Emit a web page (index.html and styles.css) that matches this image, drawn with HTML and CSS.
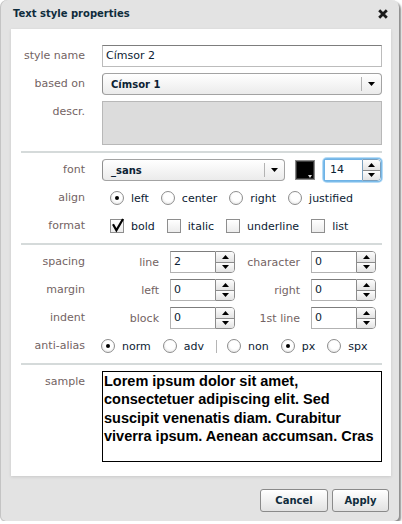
FILE: index.html
```html
<!DOCTYPE html>
<html>
<head>
<meta charset="utf-8">
<link rel="stylesheet" href="styles.css">
</head>
<body>
<div class="window">
  <div class="titlebar">
    <span class="title">Text style properties</span>
    <svg class="close" viewBox="0 0 10 10" width="10" height="10"><path d="M1.2 1.2L8.8 8.8M8.8 1.2L1.2 8.8" stroke="#1b1b1b" stroke-width="2.8" fill="none"/></svg>
  </div>
  <div class="panel">
    <div class="row s1">
      <div class="label">style name</div>
      <div class="field">Címsor 2</div>
    </div>
    <div class="row s1">
      <div class="label">based on</div>
      <div class="select">
        <span class="select-text">Címsor 1</span>
        <span class="select-btn"><svg width="7" height="4" viewBox="0 0 7 4"><path d="M0 0H7L3.5 4Z" fill="#000"/></svg></span>
      </div>
    </div>
    <div class="row s1">
      <div class="label">descr.</div>
      <div class="descr"></div>
    </div>
    <div class="sep"></div>
    <div class="row">
      <div class="label">font</div>
      <div class="font-ctrl">
        <div class="select font-select">
          <span class="select-text">_sans</span>
          <span class="select-btn"><svg width="7" height="4" viewBox="0 0 7 4"><path d="M0 0H7L3.5 4Z" fill="#000"/></svg></span>
        </div>
        <div class="swatch"><svg class="swatch-arrow" width="4" height="3" viewBox="0 0 4 3"><path d="M0 0H4L2 3Z" fill="#ddd"/></svg></div>
        <div class="num size">
          <div class="num-text">14</div>
          <div class="spin">
            <span><svg width="7" height="4" viewBox="0 0 7 4"><path d="M0 4H7L3.5 0Z" fill="#000"/></svg></span>
            <span><svg width="7" height="4" viewBox="0 0 7 4"><path d="M0 0H7L3.5 4Z" fill="#000"/></svg></span>
          </div>
        </div>
      </div>
    </div>
    <div class="row">
      <div class="label">align</div>
      <div class="opts">
        <div class="opt"><span class="radio"><span class="dot"></span></span>left</div>
        <div class="opt"><span class="radio"></span>center</div>
        <div class="opt"><span class="radio"></span>right</div>
        <div class="opt"><span class="radio"></span>justified</div>
      </div>
    </div>
    <div class="row">
      <div class="label">format</div>
      <div class="opts">
        <div class="opt"><span class="check"><svg width="12" height="12" viewBox="0 0 12 12"><path d="M2 4.2L5.4 10.3L12 -1" stroke="#000" stroke-width="2.2" fill="none"/></svg></span>bold</div>
        <div class="opt"><span class="check"></span>italic</div>
        <div class="opt"><span class="check"></span>underline</div>
        <div class="opt"><span class="check"></span>list</div>
      </div>
    </div>
    <div class="sep"></div>
    <div class="row">
      <div class="label">spacing</div>
      <div class="grid4">
        <div class="sub">line</div>
        <div class="num">
          <div class="num-text">2</div>
          <div class="spin">
            <span><svg width="7" height="4" viewBox="0 0 7 4"><path d="M0 4H7L3.5 0Z" fill="#000"/></svg></span>
            <span><svg width="7" height="4" viewBox="0 0 7 4"><path d="M0 0H7L3.5 4Z" fill="#000"/></svg></span>
          </div>
        </div>
        <div class="sub">character</div>
        <div class="num">
          <div class="num-text">0</div>
          <div class="spin">
            <span><svg width="7" height="4" viewBox="0 0 7 4"><path d="M0 4H7L3.5 0Z" fill="#000"/></svg></span>
            <span><svg width="7" height="4" viewBox="0 0 7 4"><path d="M0 0H7L3.5 4Z" fill="#000"/></svg></span>
          </div>
        </div>
      </div>
    </div>
    <div class="row">
      <div class="label">margin</div>
      <div class="grid4">
        <div class="sub">left</div>
        <div class="num">
          <div class="num-text">0</div>
          <div class="spin">
            <span><svg width="7" height="4" viewBox="0 0 7 4"><path d="M0 4H7L3.5 0Z" fill="#000"/></svg></span>
            <span><svg width="7" height="4" viewBox="0 0 7 4"><path d="M0 0H7L3.5 4Z" fill="#000"/></svg></span>
          </div>
        </div>
        <div class="sub">right</div>
        <div class="num">
          <div class="num-text">0</div>
          <div class="spin">
            <span><svg width="7" height="4" viewBox="0 0 7 4"><path d="M0 4H7L3.5 0Z" fill="#000"/></svg></span>
            <span><svg width="7" height="4" viewBox="0 0 7 4"><path d="M0 0H7L3.5 4Z" fill="#000"/></svg></span>
          </div>
        </div>
      </div>
    </div>
    <div class="row">
      <div class="label">indent</div>
      <div class="grid4">
        <div class="sub">block</div>
        <div class="num">
          <div class="num-text">0</div>
          <div class="spin">
            <span><svg width="7" height="4" viewBox="0 0 7 4"><path d="M0 4H7L3.5 0Z" fill="#000"/></svg></span>
            <span><svg width="7" height="4" viewBox="0 0 7 4"><path d="M0 0H7L3.5 4Z" fill="#000"/></svg></span>
          </div>
        </div>
        <div class="sub">1st line</div>
        <div class="num">
          <div class="num-text">0</div>
          <div class="spin">
            <span><svg width="7" height="4" viewBox="0 0 7 4"><path d="M0 4H7L3.5 0Z" fill="#000"/></svg></span>
            <span><svg width="7" height="4" viewBox="0 0 7 4"><path d="M0 0H7L3.5 4Z" fill="#000"/></svg></span>
          </div>
        </div>
      </div>
    </div>
    <div class="row">
      <div class="label">anti-alias</div>
      <div class="opts aa">
        <div class="opt"><span class="radio"><span class="dot"></span></span>norm</div>
        <div class="opt"><span class="radio"></span>adv</div>
        <span class="vsep"></span>
        <div class="opt"><span class="radio"></span>non</div>
        <div class="opt"><span class="radio"><span class="dot"></span></span>px</div>
        <div class="opt"><span class="radio"></span>spx</div>
      </div>
    </div>
    <div class="sep"></div>
    <div class="row">
      <div class="label">sample</div>
      <div class="sample">Lorem ipsum dolor sit amet,<br>consectetuer adipiscing elit. Sed<br>suscipit venenatis diam. Curabitur<br>viverra ipsum. Aenean accumsan. Cras</div>
    </div>
  </div>
  <div class="footer">
    <div class="btn cancel">Cancel</div>
    <div class="btn apply">Apply</div>
  </div>
</div>
</body>
</html>
```
FILE: styles.css
```css
* { box-sizing: border-box; }
body {
  margin: 0;
  background: #fff;
  font-family: "DejaVu Sans", Verdana, sans-serif;
  font-size: 11px;
  color: #0c2233;
}
.window {
  width: 399px;
  height: 521px;
  background: #e3e3e3;
  border-radius: 7px 7px 5px 5px;
  box-shadow: inset 1px 0 0 #c4c4c4, 2px 2px 2px rgba(0,0,0,0.45);
  display: flex;
  flex-direction: column;
}
.titlebar {
  height: 29px;
  display: flex;
  justify-content: space-between;
  align-items: flex-start;
  padding: 7px 11px 0 13px;
}
.title {
  font-weight: bold;
  font-size: 10px;
  line-height: 14px;
  color: #0f2c3c;
}
.close { margin-top: 2px; }
.panel {
  margin-left: 11px;
  width: 380px;
  height: 447px;
  background: #fff;
  padding: 16px 9px 14px 10px;
  display: flex;
  flex-direction: column;
  gap: 6px;
  box-shadow: 0 1px 3px rgba(0,0,0,0.12);
}
.row {
  display: grid;
  grid-template-columns: 64px 280px;
  column-gap: 17px;
}
.label {
  text-align: right;
  color: #736363;
  line-height: 14px;
  padding-top: 4px;
  white-space: nowrap;
}
.field {
  height: 22px;
  border: 1px solid #bcbcbc;
  border-top-color: #7d7d7d;
  padding-left: 3px;
  line-height: 20px;
}
.select {
  height: 22px;
  border: 1px solid #a3a3a3;
  border-left-color: #8f8f8f;
  border-radius: 4px;
  background: linear-gradient(#ffffff, #ebebeb);
  display: flex;
  align-items: center;
}
.select-text {
  flex: 1;
  padding-left: 8px;
  font-weight: bold;
  font-size: 10px;
}
.select-btn {
  width: 20px;
  height: 14px;
  border-left: 1px solid #b3b3b3;
  display: flex;
  align-items: center;
  justify-content: center;
}
.descr {
  height: 44px;
  background: #dcdcdc;
  border: 1px solid #b8b8b8;
}
.sep {
  height: 2px;
  background: #d5dada;
}
.font-ctrl {
  display: flex;
  align-items: center;
}
.font-select { width: 183px; }
.swatch {
  position: relative;
  margin-left: 10px;
  width: 20px;
  height: 20px;
  border: 1px solid #8a8a8a;
  background: #000;
  box-shadow: inset 0 0 0 1px #3a3a3a;
}
.swatch-arrow {
  position: absolute;
  right: 2px;
  bottom: 1px;
}
.num {
  display: flex;
  height: 22px;
}
.num-text {
  flex: 1;
  border: 1px solid #b2b2b2;
  border-top-color: #7d7d7d;
  border-right: none;
  padding-left: 3px;
  line-height: 20px;
  background: #fff;
}
.spin {
  width: 20px;
  display: flex;
  flex-direction: column;
  border: 1px solid #8b8b8b;
  border-radius: 0 4px 4px 0;
  overflow: hidden;
}
.spin span {
  flex: 1;
  display: flex;
  align-items: center;
  justify-content: center;
  background: linear-gradient(#fdfdfd, #e3e3e3);
}
.spin span + span { border-top: 1px solid #8b8b8b; }
.num.size {
  margin-left: 9px;
  width: 57px;
  border-radius: 3px;
  box-shadow: 0 0 0 1px #7cbcea, 0 0 0 2px #b7dcf6;
}
.num.size .num-text {
  border-color: #6fb3e6;
  padding-left: 5px;
}
.num.size .spin { width: 19px; border-color: #7a9fbd; }
.opts {
  display: flex;
  align-items: center;
  gap: 12px;
  padding-left: 8px;
  height: 22px;
}
.opts.aa {
  padding-left: 0;
  margin-left: -1px;
}
.opt {
  display: flex;
  align-items: center;
  gap: 7px;
  white-space: nowrap;
}
.radio {
  width: 14px;
  height: 14px;
  border-radius: 50%;
  border: 1px solid #8e8e8e;
  background: radial-gradient(circle at 55% 40%, #ffffff 45%, #d9d9d9 100%);
  display: flex;
  align-items: center;
  justify-content: center;
}
.dot {
  width: 4px;
  height: 4px;
  border-radius: 50%;
  background: #000;
}
.check {
  width: 14px;
  height: 14px;
  border: 1px solid #8e8e8e;
  background: linear-gradient(#ffffff, #ececec);
  display: flex;
}
.check svg { overflow: visible; }
.vsep {
  width: 1px;
  height: 13px;
  background: #b5b5b5;
  margin-right: -2px;
}
.grid4 {
  display: grid;
  grid-template-columns: 57px 65px 54px 65px;
  column-gap: 11px;
  align-items: center;
}
.sub {
  text-align: right;
  color: #736363;
  white-space: nowrap;
}
.sample {
  height: 91px;
  border: 1px solid #000;
  padding: 0 1px 0 1px;
  font-family: "Liberation Sans", Arial, sans-serif;
  font-weight: bold;
  font-size: 14.5px;
  line-height: 18.3px;
  color: #000;
  white-space: nowrap;
  overflow: hidden;
}
.footer {
  display: flex;
  justify-content: flex-end;
  gap: 4px;
  padding: 13px 10px 0 0;
}
.btn {
  height: 23px;
  border: 1px solid #8a8a8a;
  border-radius: 3px;
  background: linear-gradient(#ffffff, #e2e2e2);
  box-shadow: inset 0 1px 0 #fff;
  font-weight: bold;
  font-size: 10px;
  color: #0f2c3c;
  display: flex;
  align-items: center;
  justify-content: center;
}
.cancel { width: 68px; }
.apply { width: 57px; }
```
